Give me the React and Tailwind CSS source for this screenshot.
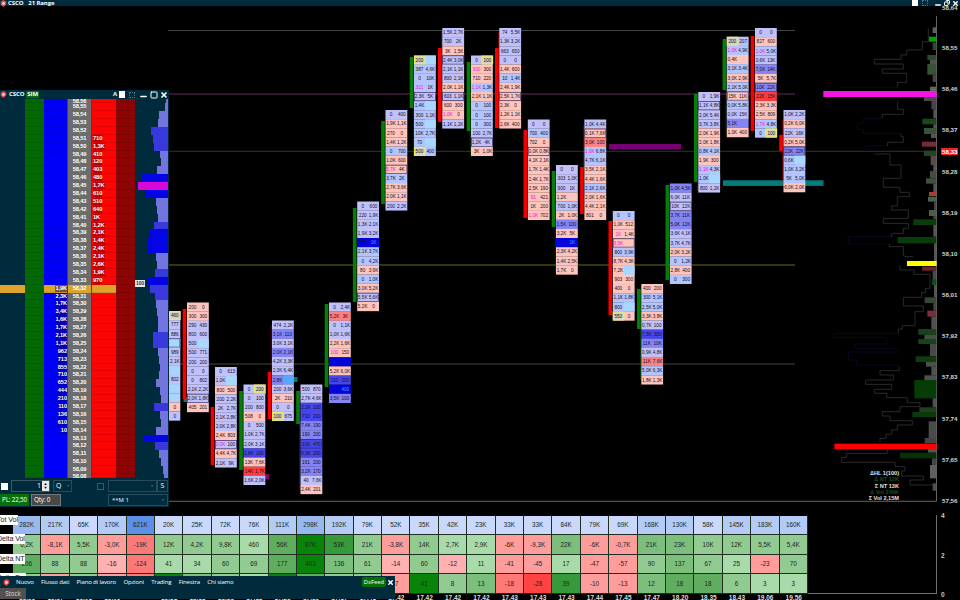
import { Copy, Minus, Square, X } from "lucide-react";

const ROW = 9.13;

const fills = {
  b: "#c0c0fb",
  s: "#b4c4ff",
  c: "#a8d4ff",
  p: "#ffc4bc",
  r: "#ff8080",
  R: "#ff3c3c",
  m: "#8484f4",
  d: "#4646ec",
  D: "#0404dc"
};

// rows: "fill left right flags"
// flags: _ boxed, y/Y yellow left/right, k pink left value, c cyan right cell
const bars = [
  {
    x: 158.5, y: 311,
    rows: ["b . 460 Y", "b . 777", "b . 886", "s . . _c", "b . 989", "b . 2,1K", "c . .", "b . 802", "c . .", "c . .", "p . 0", "b . 0"]
  },
  {
    x: 187, y: 302.5, side: "red", from: 309, to: 399,
    rows: ["p 200 0", "p 300 300", "b 290 430", "b 800 600", "b 500 . c", "b 500 771", "b 200 200", "b 0 0", "b 0 802", "b 2,1K 2,2K", "b 2,0K 1,8K _", "p 405 201"]
  },
  {
    x: 215, y: 367, side: "red", from: 407, to: 465,
    rows: ["b 0 613", "b 1,0K . c", "p 800 500", "b 200 2,2K", "b 2K 2,7K", "b 2,1K 2,8K", "b 2,0K 2,8K", "p 2,4K 803", "b 0,0K 100 _k", "p 4,4K 4,7K", "b 2,1K 9K"]
  },
  {
    x: 243.5, y: 384.5, side: "green", from: 391, to: 470,
    rows: ["b 0 200 Y", "b 0 100", "b 200 800", "p 508 0", "b 0 500", "b 1,0K 2,7K", "b 2,0K 3,1K", "d 2,8K 100", "p 13K 7,6K", "R 14K 1,7K", "b 1,6K 2,0K"]
  },
  {
    x: 272, y: 320.5, side: "red", from: 372, to: 419, wick: [325, 419],
    rows: ["b 474 2,2K", "m 3,1K 110", "b 3,0K 3,1K", "m 2,0K 2,1K", "b 4,2K 3,3K", "b 2,3K 6,4K", "m 2,8K . c", "b 200 3,6K", "p 2K 210", "b 0 0", "b 100 675 y"]
  },
  {
    x: 300.5, y: 384.5, side: "green", from: 391, to: 424, wick: [391, 490],
    rows: ["b 500 870", "b 2,7K 4,6K", "d 2,1K 100", "d 710 200", "m 7,4K 190", "m 190 200", "d 100 470 _", "d 6,3K 200", "m 161 200", "m 3,2K 170", "b 40 7,6K", "p 2,4K 201"]
  },
  {
    x: 329, y: 302.5, side: "green", from: 304, to: 387,
    rows: ["b 0 2,4K", "r 5,2K 3K", "b 0 1,1K", "b 1,0K 1,6K", "p 2,2K 1,6K", "p 100 150 k", "D . .", "p 5,2K 6,0K", "d 110 200", "D . 400", "m 3,5K 100"]
  },
  {
    x: 357.2, y: 201.5, side: "green", from: 208, to: 302,
    rows: ["b 0 600", "b 220 1,9K", "b 1,3K 2,1K", "b 1,9K 3,2K", "D 700 1K", "s 2,1K 3,7K", "s 0 4,2K", "p 80 3,9K", "s 0 1,0K", "p 3,0K 5,2K", "b 5,5K 5,6K _", "p 5,2K 0"]
  },
  {
    x: 385.5, y: 110, side: "green", from: 121, to: 204,
    rows: ["b 0 400", "p 1,9K 1,1K", "p 270 0", "p 1,4K 1,2K", "s 0 700", "p 1,0K 600", "p 5,7K 4K _k", "s 3,7K 2K", "p 2,7K 3,6K", "p 2,0K 1,1K", "b 200 2,2K"]
  },
  {
    x: 414, y: 55.5, side: "green", from: 57, to: 108, wick: [57, 156],
    rows: ["s 200 . yc", "s 387 4,6K", "s 0 10K", "s 321 1K k", "b 2,3K 5K _", "s 1,4K . c", "s 300 1,1K", "s 500 . c", "s 10K 2,7K", "s 70 . c", "s 500 400 y"]
  },
  {
    x: 442.3, y: 28, side: "red", from: 48, to: 122, wick: [32, 122],
    rows: ["b 1,5K 2,7K", "b 700 2K", "p 3K 1,5K", "b 2,4K 3,0K _", "b 2,1K 1,1K", "b 800 2,1K", "p 2,0K 1,1K", "b 603 1,1K _", "p 600 300", "p 1,0K 0 k", "b 1,1K 1,2K"]
  },
  {
    x: 471, y: 55.5, side: "green", from: 62, to: 131, wick: [62, 155],
    rows: ["b 0 100 Y", "p 300 300 k", "p 710 220", "s 1,1K 1,3K k", "p 2,1K 1,1K", "s 0 100", "s 0 100", "s 0 300", "b 100 2,7K", "b 1,2K 4K _", "p 3K 1,0K"]
  },
  {
    x: 499.3, y: 28, side: "red", from: 48, to: 128, wick: [32, 128],
    rows: ["b 74 5,5K", "b 1,3K 3,2K", "b 663 650", "b 0 0", "p 1,4K 600", "s 10 1,4K", "p 2,4K 1,9K", "p 2,5K 1,7K _", "p 2,3K 0", "p 1,2K 1,1K", "p 2,6K 400"]
  },
  {
    x: 527.8, y: 119.5, side: "red", from: 130, to: 218,
    rows: ["b 0 0", "s 700 400", "p 702 0", "p 0,0K 0,8K _", "p 4,1K 2,1K", "p 1,7K 1,4K", "p 2,4K 1,7K", "p 2,5K 190", "p 91 421 k", "p 1K 200", "p 1,0K 702 k"]
  },
  {
    x: 556, y: 165, side: "green", from: 171, to: 227, wick: [171, 273],
    rows: ["b 0 0", "b 303 1,0K", "b 900 1K", "p 1,2K .", "s 700 1,0K", "p 2K 1,0K", "m 1,5K 100", "p 3,2K 5K", "D . 1K", "p 2,3K 4,2K", "p 1,4K 2,5K", "p 1,7K 0"]
  },
  {
    x: 584.4, y: 119.5, side: "red", from: 167, to: 214, wick: [125, 214],
    rows: ["b 1,0K 4,4K", "p 0,1K 7,6K _", "r 3,0K 100", "s 1,0K 6,8K k", "s 4,7K 6,1K", "p 3,5K 2,1K", "p 4,4K 1,6K", "s 2,1K 2,6K", "p 2,0K 1,6K", "p 4,4K 2,1K", "p 801 0"]
  },
  {
    x: 612.8, y: 211, side: "red", from: 221, to: 315,
    rows: ["s 0 0", "p 1,0K 512", "p 1K 1,4K k", "p 3,5K . _k", "s 800 3,9K", "p 8,7K 4,3K", "p 7,2K . c", "p 903 300", "p 400 0", "s 1,1K 1,8K", "s 800 . c", "p 550 0 y"]
  },
  {
    x: 641.3, y: 284, side: "green", from: 289, to: 329, wick: [289, 380],
    rows: ["p 400 200", "s 300 5,1K", "s 2,5K 5,0K", "p 3,3K 3,8K", "b 0,7K 100", "d 7,5K 300", "m 11K 10K", "b 0,9K 4,8K", "r 11K 7,6K", "s 5,0K 6,3K", "p 1,8K 1,3K"]
  },
  {
    x: 669.8, y: 183.5, side: "green", from: 185, to: 280,
    rows: ["m 1,0K 4,5K", "b 6,0K 11K", "b 10K 12K _", "m 3,7K 11K", "m 5,0K 12K", "b 3,6K 4,1K", "b 3,7K 4,7K", "p 2,0K 3,2K", "s 0 1,2K", "p 2,8K 400", "s 0 300"]
  },
  {
    x: 698.3, y: 92, side: "green", from: 94, to: 182, wick: [94, 191],
    rows: ["b 0 1,9K", "b 1,1K 4,8K _", "b 2,0K 5,4K", "b 3,7K 3,8K", "p 2,0K 1,9K", "p 2,0K 1,8K", "s 0,8K 4,1K", "p 1,9K 300", "s 1,1K 4,3K k", "s 1,0K . c", "b 800 1,2K"]
  },
  {
    x: 726.8, y: 36.7, side: "green", from: 39, to: 90, wick: [39, 135],
    rows: ["b 200 207 y", "s 1,0K 4,9K k", "p 0,4K .", "s 3,1K 3,4K", "p 3,0K 2,9K", "s 2,1K 5,0K", "p 15K 11K _", "s 0,0K 5,8K", "b 0,0K 15K", "m 5,1K .", "p 1,0K 400"]
  },
  {
    x: 755, y: 28, side: "red", from: 36, to: 131,
    rows: ["b 0 0", "p 827 600", "s 1,0K 5,0K k", "b 0,6K 13K", "m 7,0K 14K", "p 5K 5,7K", "m 10K 22K _", "R 22K 15K", "p 2,3K 3,3K", "p 2,5K 809", "s 1,7K 4,8K k", "s 0 100 Y"]
  },
  {
    x: 783.5, y: 110, side: "red", from: 135, to: 151, wick: [120, 184],
    rows: ["b 1,0K 2,2K", "p 0,2K 6,0K", "b 22K 16K", "p 0,2K 5,0K", "m 22K 22K _", "s 0,6K . c", "s 1,0K 3,2K", "s 5K 5,0K", "p 6,0K 2,0K"]
  }
];

// [left, top, height, fill] in profile units, all bars end on the axis
const histogram = [
  [338, 82, 17, "#606060"], [327, 110, 15, "#00a000"], [338, 128, 22, "#2c4a2c"], [322, 165, 15, "#2c4a2c"],
  [330, 180, 12, "#4a564a"], [322, 192, 32, "#385238"], [338, 224, 22, "#444"], [330, 260, 14, "#666"],
  [312, 290, 13, "#4c4c4c"], [334, 303, 25, "#444"], [340, 328, 27, "#555"], [307, 356, 17, "#1c461c"],
  [340, 373, 11, "#555"], [312, 384, 18, "#385238"], [333, 402, 12, "#555"], [306, 425, 15, "#762c38"],
  [312, 452, 16, "#244224"], [332, 468, 27, "#564c48"], [340, 495, 18, "#555"], [330, 513, 22, "#444c40"],
  [318, 535, 16, "#3c503c"], [340, 551, 25, "#555"], [327, 576, 12, "#a8402c"], [324, 590, 15, "#4c604c"],
  [342, 605, 25, "#444"], [327, 630, 18, "#4c5c4c"], [340, 648, 10, "#444"], [280, 658, 17, "#0c3c0c"],
  [340, 675, 35, "#555"], [233, 711, 19, "#083c08"], [342, 730, 62, "#555"], [306, 800, 12, "#702424"],
  [338, 812, 25, "#484848"], [336, 837, 18, "#104c18"], [342, 855, 37, "#555"], [314, 892, 17, "#344834"],
  [340, 909, 23, "#444"], [322, 932, 18, "#7a303c"], [334, 950, 37, "#505050"], [295, 987, 17, "#1a421a"],
  [313, 1004, 13, "#405040"], [295, 1017, 15, "#1a421a"], [330, 1032, 37, "#484848"], [287, 1069, 17, "#0e3c0e"],
  [318, 1086, 14, "#485048"], [334, 1100, 26, "#505050"], [313, 1126, 14, "#4c504c"], [283, 1140, 55, "#063c06"],
  [338, 1195, 27, "#505050"], [298, 1222, 14, "#1e401e"], [277, 1236, 15, "#0a3c0a"], [326, 1264, 50, "#484c48"],
  [314, 1314, 16, "#444"], [324, 1346, 12, "#555"], [240, 1358, 17, "#063006"], [336, 1375, 20, "#444"],
  [330, 1395, 40, "#606060"], [338, 1450, 22, "#505050"]
];

const outline =
  "M325 85V125H307V150H260V165H243V178H163V192H250V207H187V220H260V247H233V262M233 305V328H250V343H187V355M243 400V410H250V427H203V438M165 462H210V495H243V535H190V562H240V577H268V590H232V618H215V630H265V655H190V670H265V685H250V700H215V712M208 732V740H250V768H255M255 770H280M240 795V810H282V823H330V865H317V877H305V892H250V918H310V935H285V977H247V987H235V1000M238 1100V1112H180V1125H220V1140H137V1153H215V1168H163V1180H200V1193H262V1208H300V1220H240V1235H187V1248H210V1262H277V1275H232V1290H215V1303H198V1315H180V1327M202 1347V1360H80V1372H65V1387H225V1400H255V1413H245V1428H310V1440H270V1455H340";

const outlineDim =
  "M187 355H130V370H112V388H130V400H243M203 438H135V450H165M215 710H85V732H208M235 1000H40V1012H200V1032H105V1045H235V1056H85V1080H110V1095H238M60 262H233";

const prices = ["58,55", "58,46", "58,37", "58,28", "58,19", "58,10", "58,01", "57,92", "57,83", "57,74", "57,65", "57,56"];

const asks = ["710", "1,3K", "410", "120", "403", "480", "1,7K", "610", "510", "640", "1K", "1,2K", "2,1K", "1,4K", "2,4K", "2,1K", "2,6K", "1,9K", "970"];
const bids = ["1,9K", "2,3K", "1,7K", "3,4K", "1,6K", "1,7K", "2,1K", "1,1K", "962", "713", "855", "710", "652", "444", "210", "110", "136", "610", "10"];
const volumes = [2, 3, 9, 10, 17, 15, 14, 8, 7, 11, 27, 30, 23, 12, 11, 10, 14, 19, 21, 21, 12, 11, 13, 21, 18, 13, 12, 11, 10, 10, 15, 15, 10, 9, 8, 9, 12, 8, 7, 14, 8, 7, 12, 24, 13, 9, 7, 5, 4];

const ladder = volumes.map((volume, index) => ({
  price: `58,${String(56 - index).padStart(2, "0")}`,
  ask: asks[index - 5],
  bid: bids[index - 24],
  last: index === 24,
  volume
}));

const heat = {
  a: "bg-[#c9d8fb]",
  b: "bg-[#b4cbf6]",
  c: "bg-[#98b9f0]",
  d: "bg-[#5c8fe8]",
  1: "bg-[#a9daa9]",
  2: "bg-[#92cb92]",
  3: "bg-[#7cbf7c]",
  4: "bg-[#5fae5f]",
  5: "bg-[#36993a]",
  6: "bg-[#088508]",
  w: "bg-[#ffb0b0]",
  x: "bg-[#ff9c9c]",
  y: "bg-[#ff7878]",
  z: "bg-[#ff4242]"
};

const table = [
  {
    label: "Tot Vol",
    tones: "cbabdaaaabcbaaaaaaaaaabbabbb",
    values: "282K 217K 65K 170K 621K 20K 25K 72K 76K 111K 298K 192K 79K 52K 35K 42K 23K 33K 33K 84K 79K 69K 168K 130K 58K 145K 183K 160K"
  },
  {
    label: "Delta Vol",
    tones: "2x2xy22214652x211xx3xx332222",
    values: "6,2K -8,1K 5,5K -3,0K -19K 12K 4,2K 9,8K 460 56K 87K 53K 21K -3,8K 14K 2,7K 2,9K -6K -9,3K 22K -6K -0,7K 21K 23K 10K 12K 5,5K 5,4K"
  },
  {
    label: "Delta NT",
    tones: "422wy11224632w2w1xx1xx2321x2",
    values: "206 88 88 -16 -124 41 34 60 69 177 403 136 61 -14 60 -12 11 -41 -45 17 -47 -57 90 137 67 25 -23 70"
  },
  {
    label: "Delta Bar",
    tones: "2x2xy63216422x623yz5xx344211",
    values: "9 -8 8 -6 -20 41 13 8 3 30 18 12 8 -7 41 8 13 -18 -28 39 -10 -13 12 18 18 6 3 3"
  }
];

const times = "15.55 15.57 16.01 16.06 . 15.31 15.33 15.38 17.11 17.25 17.35 17.37 17.41 17.42 17.42 17.42 17.42 17.43 17.43 17.43 17.44 17.45 17.47 18.20 18.35 18.43 19.06 19.56".split(" ");

const menu = ["Nuovo", "Flusso dati", "Piano di lavoro", "Opzioni", "Trading", "Finestra", "Chi siamo"];

function Logo() {
  return (
    <svg className="size-[7px] shrink-0" viewBox="0 0 10 10" aria-hidden="true">
      <path d="M1 2 5 0l4 2v4L5 10 1 7Z" fill="#e04848" />
      <circle cx="5" cy="5" r="2" fill="#ffd0d0" />
    </svg>
  );
}

function FootprintBar({ bar }) {
  const color = bar.side === "red" ? "#f40000" : "#087c08";
  return (
    <g>
      {bar.wick && (
        <line x1={bar.x - 0.8} x2={bar.x - 0.8} y1={bar.wick[0]} y2={bar.wick[1]} stroke={color} strokeWidth="0.7" opacity="0.6" />
      )}
      {bar.side && <rect x={bar.x - 4.3} y={bar.from} width="3.6" height={bar.to - bar.from} fill={color} />}
      {bar.rows.map((row, index) => {
        const [fill, left, right, flags = ""] = row.split(" ");
        const y = bar.y + index * ROW;
        return (
          <g key={index}>
            <rect x={bar.x} y={y} width="21.8" height={ROW + 0.1} fill={fills[fill]} />
            {flags.includes("c") && <rect x={bar.x + 11} y={y} width="10.8" height={ROW} fill={fill === "m" ? "#54a8ff" : "#a8d8ff"} />}
            {flags.includes("_") && (
              <rect x={bar.x + 0.4} y={y + 0.4} width="21" height={ROW - 0.8} fill="none" stroke="#3c2c60" strokeWidth="0.7" />
            )}
            {/[yY]/.test(flags) && (
              <rect
                x={bar.x + (flags.includes("Y") ? 11 : 0.5)}
                y={y + 0.6}
                width="10.6"
                height={ROW - 1.2}
                fill="#d4d4c4"
                stroke="#ecec60"
                strokeWidth="1.1"
              />
            )}
            {left !== "." && (
              <text x={bar.x + 5.5} y={y + 6.3} fill={flags.includes("k") ? "#f010d0" : "#14101c"}>
                {left}
              </text>
            )}
            {right !== "." && (
              <text x={bar.x + 16.3} y={y + 6.3} fill={fill === "D" ? "#48a0ff" : "#14101c"}>
                {right}
              </text>
            )}
          </g>
        );
      })}
    </g>
  );
}

function Chart() {
  return (
    <svg className="block h-[509px] w-[937px] shrink-0" viewBox="0 6 937 509">
      <g strokeWidth="0.9">
        <path d="M168 30.5H795M168 364H795" stroke="#4a4f4a" />
        <path d="M168 94H795" stroke="#72306e" />
        <path d="M168 151.3H936" stroke="#383838" />
        <path d="M168 265H795" stroke="#77771c" />
        <path d="M0 501.3H936.5V16" stroke="#707070" fill="none" />
      </g>
      <rect x="609" y="144" width="72" height="5.5" fill="#740074" />
      <rect x="723" y="180.3" width="100.5" height="5.6" fill="#047c7c" />
      <rect x="293" y="377" width="4.5" height="5" fill="#087878" />
      <rect x="265" y="474" width="4" height="5" fill="#780a70" />
      <rect x="183.5" y="397" width="4" height="5" fill="#28686c" />
      <g fontFamily="Liberation Sans, sans-serif" fontSize="4.7" textAnchor="middle">
        {bars.map((bar) => (
          <FootprintBar key={bar.x} bar={bar} />
        ))}
      </g>
      <g transform="translate(820 0) scale(0.33333)">
        <path d={outlineDim} fill="none" stroke="#080822" strokeWidth="3" />
        <path d={outline} fill="none" stroke="#343436" strokeWidth="2.4" />
        {histogram.map(([x, y, height, fill]) => (
          <rect key={y} x={x} y={y} width={349 - x} height={height} fill={fill} />
        ))}
        <rect x="10" y="273" width="340" height="18" fill="#f414e4" />
        <rect x="261" y="783" width="89" height="15" fill="#ffff00" />
        <rect x="43" y="1331" width="307" height="17" fill="#ff0000" />
      </g>
      <g fontFamily="Liberation Sans, sans-serif" fontSize="5.6" fontWeight="bold" textAnchor="end" fill="#e0e0e0">
        <text x="899" y="475.3">ΔHL 1(100)</text>
        <text x="899" y="481.3" fill="#1c4a24">Δ NT 12K</text>
        <text x="899" y="487.6">Σ NT 13K</text>
        <text x="899" y="493.8" fill="#1c4a24">Δ Vol 249K</text>
        <text x="899" y="500.2">Σ Vol 2,15M</text>
      </g>
    </svg>
  );
}

function PriceAxis() {
  return (
    <div className="relative flex w-[23px] flex-col overflow-hidden pt-[21.5px] text-[6.2px] font-bold text-[#d4d4d4]">
      <span className="absolute top-[-2px] left-[5px] leading-[8px]">58,64</span>
      {prices.map((price) => (
        <div key={price} className="flex h-[41.2px] shrink-0 items-center pl-[5px] leading-none">
          {price}
        </div>
      ))}
      <span className="absolute top-[141.5px] left-[4px] bg-[#f02020] px-px leading-[7px] text-white">58,33</span>
    </div>
  );
}

function volumeTone(row) {
  if (row.price === "58,45") return "bg-[#d808d8]";
  if (row.volume > 18) return "bg-[#0404e4]";
  if (row.volume > 12) return "bg-[#3838dc]";
  return "bg-[#7474e0]";
}

function LadderRow({ row }) {
  const line = "border-b border-black/10";
  return (
    <div className="flex h-[7.9px] shrink-0 font-['Liberation_Sans',sans-serif] text-[5.7px] leading-[7.9px] font-bold tracking-[-0.1px] text-white first:h-[4.2px] first:leading-[5px] last:h-[4px] last:leading-[5px]">
      <div className={`w-[25px] ${row.last ? "bg-[#dca428]" : ""}`} />
      <div className={`w-[19px] bg-[#046804] ${line}`} />
      <div className={`w-[23px] text-right ${line} ${row.last ? "bg-[#dca428]" : "bg-[#0000fa]"}`}>
        {row.bid && <span className="inline-block h-full bg-[#000064]/50">{row.bid}</span>}
      </div>
      <div className={`w-[25px] border-x border-[#444] text-center ${row.last ? "bg-[#dca428]" : "bg-[#6c6c6c]"}`}>{row.price}</div>
      <div className={`w-[24px] pl-px ${line} ${row.last ? "bg-[#dca428]" : "bg-[#fb0404]"}`}>
        {row.ask && <span className="inline-block h-full bg-[#700000]/50">{row.ask}</span>}
      </div>
      <div className={`w-[19px] bg-[#8c0404] ${line}`} />
      <div className="flex w-[33px] justify-end">
        <div className={volumeTone(row)} style={{ width: row.volume }} />
      </div>
    </div>
  );
}

function LadderWindow() {
  return (
    <div className="absolute top-[90px] left-0 flex h-[417px] w-[169px] flex-col bg-[#002b3d] text-[6.5px] whitespace-nowrap text-white">
      <div className="flex h-[9px] shrink-0 items-center gap-[2px] pr-px text-[6px] font-bold tracking-[-0.1px]">
        <Logo />
        <span>CSCO</span>
        <span className="bg-[#047004] px-px leading-[7px]">SIM</span>
        <span className="ml-auto">A</span>
        <span className="h-[7px] w-[6px] bg-white" />
        <span className="mx-[2px] size-[6px] border border-dotted border-[#58707c]" />
        <Minus className="mt-1 size-[9px]" strokeWidth={4} />
        <Square className="size-[8px]" strokeWidth={3} />
        <X className="size-[8px]" strokeWidth={5} />
      </div>
      <div className="flex h-[379px] shrink-0 flex-col overflow-hidden">
        {ladder.map((row) => (
          <LadderRow key={row.price} row={row} />
        ))}
      </div>
      <div className="mt-[2px] flex h-[12px] shrink-0 items-center pl-px">
        <span className="size-[7px] bg-white" />
        <span className="ml-[3px] flex h-full w-[39px] items-center justify-end border border-[#3c5864]">
          <span className="mr-px text-[7px]">1</span>
          <span className="flex h-[10px] w-[7px] flex-col items-center justify-center bg-[#e8e8e8] text-[4px] leading-[4px] text-black">
            <span>▲</span>
            <span>▼</span>
          </span>
        </span>
        <span className="ml-[3px] flex h-full w-[19px] items-center justify-between border border-[#284c5c] px-[2px] text-[7px]">
          Q<span className="text-[4px] text-[#58707c]">▾</span>
        </span>
        <span className="ml-[25px] size-[7px] border border-[#3c5864]" />
        <span className="ml-[4px] flex h-full w-[49px] items-center justify-end border border-[#284c5c] pr-[3px] text-[4px] text-[#58707c]">▾</span>
        <span className="flex h-full w-[11px] items-center justify-center border border-[#284c5c] text-[7px]">S</span>
      </div>
      <div className="mt-[2px] flex h-[12px] shrink-0 items-center">
        <span className="flex h-full w-[29px] items-center bg-[#087008] pl-[2px] text-[6.4px] tracking-[-0.2px]">PL: 22,50</span>
        <span className="ml-[2px] flex h-full w-[30px] items-center border border-[#777] bg-[#484848] pl-[2px] text-[6.4px] tracking-[-0.2px]">Qty: 0</span>
        <span className="ml-auto mr-[1px] flex h-full w-[60px] items-center justify-between border border-[#284c5c] px-[3px] text-[6px]">
          **M 1<span className="text-[4px] text-[#58707c]">▾</span>
        </span>
      </div>
      <span className="absolute top-[190px] left-[135px] bg-[#e8e8e8] px-px font-['Liberation_Sans',sans-serif] text-[5px] leading-[7px] font-bold text-[#333]">
        100
      </span>
    </div>
  );
}

function Heatmap() {
  return (
    <div className="flex h-[85px]">
      <div className="w-[937px] overflow-hidden">
        <div className="relative h-[78.5px] border-r border-b border-[#707070] pt-[0.5px]">
          {table.map((row) => (
            <div key={row.label} className="relative flex h-[19.5px] pl-[13px]">
              {row.values.split(" ").map((value, index) => (
                <div
                  key={index}
                  className={`flex h-full w-[28.4px] shrink-0 items-center justify-center border-r border-b border-[#203020] text-[6.3px] text-[#202820] ${heat[row.tones[index]]}`}
                >
                  {value}
                </div>
              ))}
              <span className="absolute top-[-1px] left-[-3px] h-[10px] bg-white text-[7.2px] leading-[10px] tracking-[-0.1px] text-[#222]">
                {row.label}
              </span>
            </div>
          ))}
        </div>
        <div className="flex h-[8px] pl-[13px] text-[6.5px] leading-[8px] font-bold text-[#dcdcdc]">
          {times.map((time, index) => (
            <span key={index} className="w-[28.4px] shrink-0 text-center">
              {time === "." ? "" : time}
            </span>
          ))}
        </div>
      </div>
      <div className="-mt-[3px] flex h-[86px] w-[23px] flex-col justify-between pl-[4px] text-[6.5px] leading-[7px] font-bold text-[#c8c8c8]">
        <span>4</span>
        <span>2</span>
        <span>0</span>
      </div>
    </div>
  );
}

function Taskbar() {
  return (
    <div className="absolute top-[576px] left-0 flex h-[23px] w-[395px] flex-col bg-[#002b3d] text-[6px] text-white">
      <div className="flex h-[12px] items-center pr-px pl-[3px]">
        <Logo />
        <div className="ml-[6px] flex gap-[7.3px] tracking-[-0.14px] whitespace-nowrap">
          {menu.map((item) => (
            <span key={item}>{item}</span>
          ))}
        </div>
        <span className="ml-auto mr-[1px] rounded-xs bg-[#087008] px-[2px] text-[5.8px] leading-[10px]">DxFeed</span>
        <X className="size-[7px]" strokeWidth={5} />
      </div>
      <span className="flex h-[11px] w-[26px] items-center justify-center bg-[#505050] text-[6.2px] text-[#ddd]">Stock</span>
    </div>
  );
}

export default function App() {
  return (
    <div className="relative flex h-[600px] w-[960px] flex-col overflow-hidden bg-black font-['Open_Sans',sans-serif]">
      <header className="flex h-[6px] shrink-0 items-center bg-[#002b3d] pr-px text-[6px] leading-[6px] font-bold tracking-[-0.1px] text-white">
        <Logo />
        <span className="ml-px">CSCO</span>
        <span className="ml-[5px]">21 Range</span>
        <span className="ml-auto h-[6px] w-[6px] bg-white" />
        <span className="mx-[4px] size-[6px] border border-dotted border-[#58707c]" />
        <Minus className="mt-[3px] ml-[2px] size-[8px]" strokeWidth={4} />
        <Copy className="mx-[2px] size-[6px] -scale-x-100" strokeWidth={4} />
        <X className="size-[7px]" strokeWidth={5} />
      </header>
      <main className="flex h-[509px] shrink-0 font-['Liberation_Sans',sans-serif]">
        <Chart />
        <PriceAxis />
      </main>
      <section className="font-['Liberation_Sans',sans-serif]">
        <Heatmap />
      </section>
      <LadderWindow />
      <Taskbar />
    </div>
  );
}
